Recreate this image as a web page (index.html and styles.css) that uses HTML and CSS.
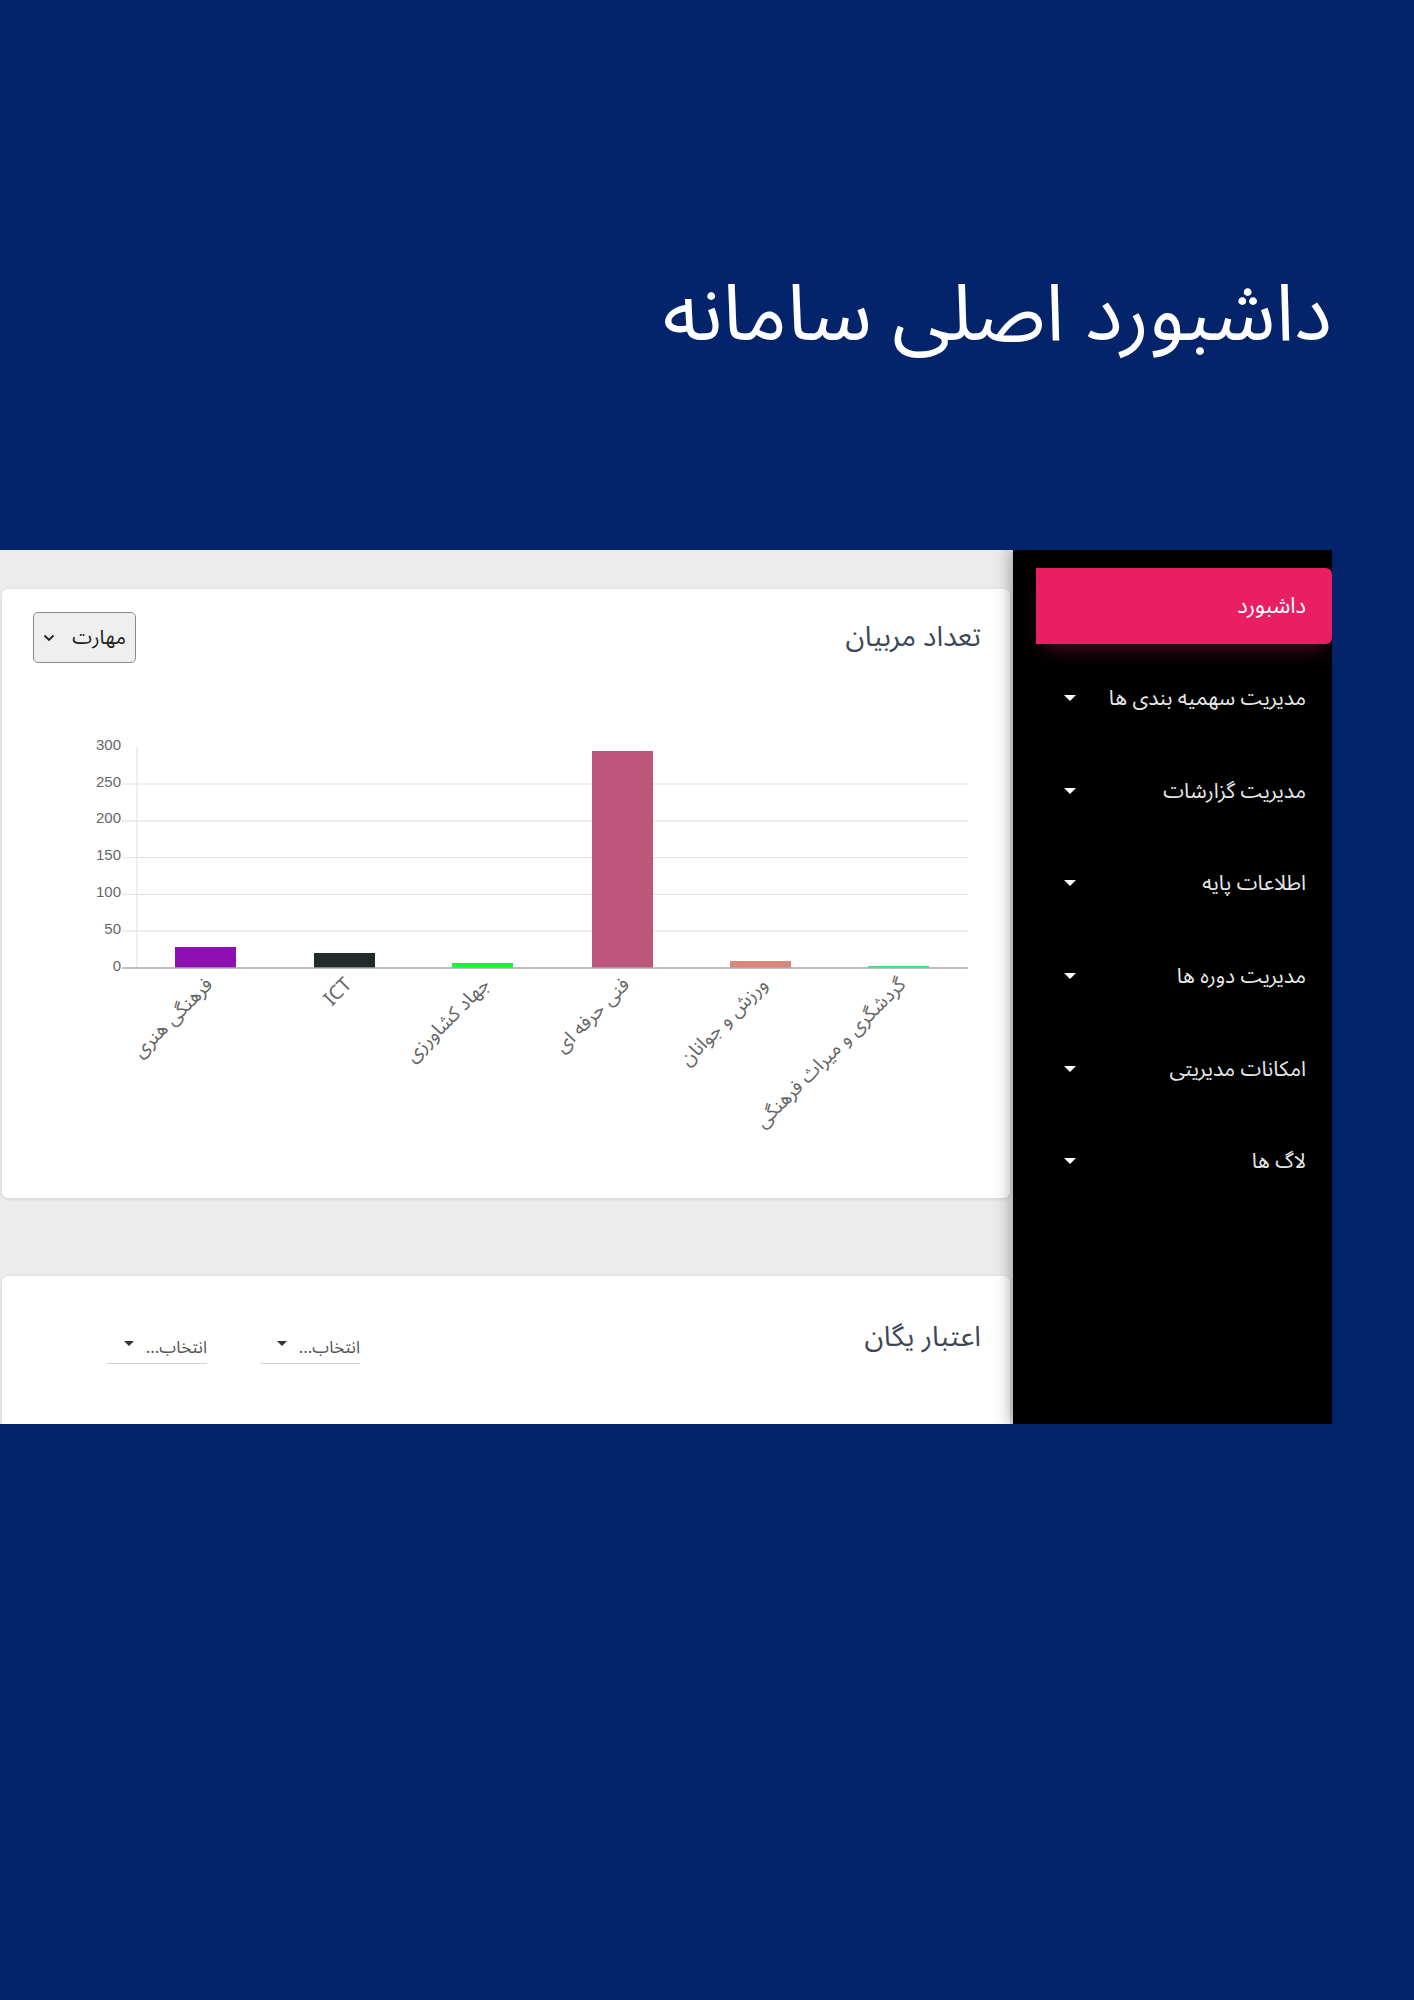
FILE: index.html
```html
<!DOCTYPE html>
<html lang="fa">
<head>
<meta charset="utf-8">
<title>داشبورد اصلی سامانه</title>
<link rel="stylesheet" href="styles.css">
</head>
<body>
<header class="hero">
  <h1 class="hero-title" dir="rtl">داشبورد اصلی سامانه</h1>
</header>
<section class="panel" dir="rtl">
  <aside class="sidebar">
    <div class="nav-active">داشبورد</div>
    <ul class="nav">
      <li class="nav-item"><span>مدیریت سهمیه بندی ها</span><i class="caret"></i></li>
      <li class="nav-item"><span>مدیریت گزارشات</span><i class="caret"></i></li>
      <li class="nav-item"><span>اطلاعات پایه</span><i class="caret"></i></li>
      <li class="nav-item"><span>مدیریت دوره ها</span><i class="caret"></i></li>
      <li class="nav-item"><span>امکانات مدیریتی</span><i class="caret"></i></li>
      <li class="nav-item"><span>لاگ ها</span><i class="caret"></i></li>
    </ul>
  </aside>
  <main class="main">
    <div class="card card-chart">
      <div class="card-head">
        <h2 class="card-title">تعداد مربیان</h2>
        <div class="select-box"><span>مهارت</span>
          <svg class="chev" width="12" height="8" viewBox="0 0 12 8"><path d="M1.5 1.5 L6 6 L10.5 1.5" fill="none" stroke="#222" stroke-width="1.8"/></svg>
        </div>
      </div>
      <svg class="chart" width="948" height="498" viewBox="0 0 948 498">
        <g class="grid">
          <line x1="89" y1="84" x2="935" y2="84"/>
          <line x1="89" y1="120.8" x2="935" y2="120.8"/>
          <line x1="89" y1="157.6" x2="935" y2="157.6"/>
          <line x1="89" y1="194.4" x2="935" y2="194.4"/>
          <line x1="89" y1="231.2" x2="935" y2="231.2"/>
          <line x1="104" y1="47" x2="104" y2="268"/>
        </g>
        <g class="ylabels">
          <text x="88" y="50">300</text>
          <text x="88" y="86.5">250</text>
          <text x="88" y="123.3">200</text>
          <text x="88" y="160.1">150</text>
          <text x="88" y="196.9">100</text>
          <text x="88" y="233.7">50</text>
          <text x="88" y="270.5">0</text>
        </g>
        <g class="bars">
          <rect x="142" y="247" width="61" height="21" fill="#8e10b5"/>
          <rect x="281" y="253" width="61" height="15" fill="#222b2b"/>
          <rect x="419" y="263" width="61" height="5" fill="#1ff03b"/>
          <rect x="559" y="51" width="61" height="217" fill="#bc567b"/>
          <rect x="697" y="261" width="61" height="7" fill="#d9867f"/>
          <rect x="835" y="266" width="61" height="2" fill="#3ee868"/>
        </g>
        <line class="baseline" x1="89" y1="268" x2="935" y2="268"/>
        <g class="xlabels">
          <text transform="translate(177 282) rotate(-45)">فرهنگی هنری</text>
          <text transform="translate(316 282) rotate(-45)">ICT</text>
          <text transform="translate(454 282) rotate(-45)">جهاد کشاورزی</text>
          <text transform="translate(594 282) rotate(-45)">فنی حرفه ای</text>
          <text transform="translate(732 282) rotate(-45)">ورزش و جوانان</text>
          <text transform="translate(870 282) rotate(-45)">گردشگری و میراث فرهنگی</text>
        </g>
      </svg>
    </div>
    <div class="card card-second">
      <div class="card-head">
        <h2 class="card-title">اعتبار یگان</h2>
        <div class="filters">
          <div class="line-select"><span>انتخاب...</span><i class="caret dark"></i></div>
          <div class="line-select"><span>انتخاب...</span><i class="caret dark"></i></div>
        </div>
      </div>
    </div>
  </main>
</section>
</body>
</html>
```
FILE: styles.css
```css
html, body {
  margin: 0;
  padding: 0;
}
body {
  background: #03246b;
  font-family: "Noto Sans Arabic", "Vazirmatn", "DejaVu Sans", sans-serif;
  min-height: 2000px;
}
.hero {
  height: 550px;
  box-sizing: border-box;
  padding: 265px 82px 0 0;
  display: flex;
  justify-content: flex-end;
  align-items: flex-start;
}
.hero-title {
  margin: 0;
  color: #fff;
  font-weight: 400;
  font-size: 79px;
  line-height: 100px;
}
.panel {
  width: 1332px;
  height: 874px;
  margin: 0 auto 0 0;
  display: flex;
  overflow: hidden;
}
.sidebar {
  width: 319px;
  flex: 0 0 319px;
  background: #000;
  position: relative;
  z-index: 2;
  box-shadow: 0 0 16px 2px rgba(0,0,0,0.35);
  padding-top: 18px;
  box-sizing: border-box;
}
.nav-active {
  margin-inline-end: 23px;
  height: 76px;
  background: #e91e63;
  border-radius: 0 6px 6px 0;
  color: #fff;
  font-size: 22px;
  display: flex;
  align-items: center;
  padding-right: 26px;
  box-shadow: 0 10px 20px -8px rgba(233,30,99,0.45);
}
.nav {
  list-style: none;
  margin: 8px 0 0 0;
  padding: 0;
}
.nav-item {
  height: 92.6px;
  display: flex;
  align-items: center;
  justify-content: space-between;
  padding: 0 26px 0 51px;
  color: #e6e6e6;
  font-size: 21px;
}
.caret {
  display: inline-block;
  width: 0;
  height: 0;
  border-left: 6px solid transparent;
  border-right: 6px solid transparent;
  border-top: 6px solid #fff;
}
.caret.dark {
  border-left-width: 5px;
  border-right-width: 5px;
  border-top: 5px solid #333;
  margin-bottom: 8px;
}
.main {
  flex: 1;
  background: #ececec;
  padding: 39px 3px 0 2px;
  position: relative;
  z-index: 1;
}
.card {
  background: #fff;
  border-radius: 6px;
  box-shadow: 0 1px 4px rgba(0,0,0,0.12);
}
.card-chart {
  height: 609px;
  box-sizing: border-box;
  padding: 23px 29px 0 31px;
}
.card-head {
  display: flex;
  justify-content: space-between;
  align-items: center;
}
.card-title {
  margin: 0;
  font-size: 28px;
  line-height: 40px;
  font-weight: 400;
  color: #3c4858;
}
.select-box {
  width: 103px;
  height: 51px;
  box-sizing: border-box;
  border: 1px solid #8a8a8a;
  border-radius: 5px;
  background: #efefef;
  display: flex;
  align-items: center;
  justify-content: space-between;
  padding: 0 9px 0 9px;
  font-size: 20px;
  color: #222;
}
.chart {
  display: block;
  margin-top: 37px;
  direction: ltr;
}
.grid line {
  stroke: #e4e4e4;
  stroke-width: 1.2;
}
.baseline {
  stroke: #aaa;
  stroke-width: 1.5;
}
.ylabels text {
  font-family: "Liberation Sans", Arial, sans-serif;
  font-size: 15px;
  fill: #666;
  text-anchor: end;
}
.xlabels text {
  font-family: "Noto Sans Arabic", "Vazirmatn", "DejaVu Sans", sans-serif;
  font-size: 19.5px;
  fill: #666;
  text-anchor: end;
  dominant-baseline: middle;
}
.card-second {
  margin-top: 78px;
  height: 200px;
  box-sizing: border-box;
  padding: 42px 29px 0 31px;
}
.card-second .card-head {
  align-items: flex-start;
}
.filters {
  display: flex;
  gap: 53px;
  margin-left: 74px;
  margin-top: 18px;
}
.line-select {
  width: 100px;
  height: 28px;
  box-sizing: border-box;
  padding-bottom: 4px;
  border-bottom: 1px solid #d2d2d2;
  display: flex;
  align-items: center;
  gap: 12px;
  font-size: 17px;
  color: #555;
}
```
